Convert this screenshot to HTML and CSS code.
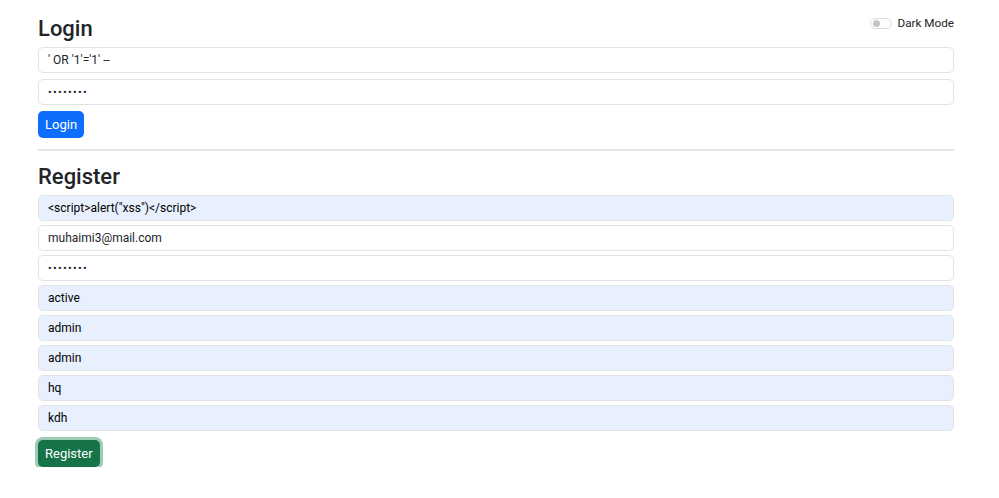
FILE: index.html
```html
<!DOCTYPE html>
<html lang="en">
<head>
<meta charset="utf-8">
<title>Login / Register</title>
<link rel="stylesheet" href="styles.css">
</head>
<body>
<div class="container">
  <div class="top-row">
    <h2 class="title">Login</h2>
    <label class="switch">
      <span class="switch-track"><span class="switch-knob"></span></span>
      <span class="switch-label">Dark Mode</span>
    </label>
  </div>
  <form class="form login-form">
    <input class="field" type="text" value="' OR '1'='1' --">
    <input class="field" type="password" value="password">
    <div><button type="button" class="btn btn-primary">Login</button></div>
  </form>
  <hr class="divider">
  <h2 class="title title-register">Register</h2>
  <form class="form register-form">
    <input class="field autofill" type="text" value="<script>alert(&quot;xss&quot;)</script>">
    <input class="field" type="text" value="muhaimi3@mail.com">
    <input class="field" type="password" value="password">
    <input class="field autofill" type="text" value="active">
    <input class="field autofill" type="text" value="admin">
    <input class="field autofill" type="text" value="admin">
    <input class="field autofill" type="text" value="hq">
    <input class="field autofill" type="text" value="kdh">
    <div class="register-actions"><button type="button" class="btn btn-success focused">Register</button></div>
  </form>
</div>
</body>
</html>
```
FILE: styles.css
```css
* { box-sizing: border-box; }
body {
  margin: 0;
  background: #fff;
  color: #212529;
  font-family: Roboto, "Liberation Sans", sans-serif;
}
.container {
  width: 916px;
  margin-left: 38px;
  padding-top: 16px;
}
.top-row {
  display: flex;
  justify-content: space-between;
  align-items: flex-start;
}
.title {
  margin: 0 0 5px;
  font-size: 22px;
  line-height: 26px;
  font-weight: 500;
}
.switch {
  display: flex;
  align-items: center;
  gap: 6px;
  margin-top: 0;
  font-size: 11.7px;
  line-height: 14px;
  color: #212529;
}
.switch-track {
  width: 22px;
  height: 11px;
  border: 1px solid #dcdcdc;
  border-radius: 6px;
  display: flex;
  align-items: center;
  padding-left: 2px;
}
.switch-knob {
  width: 7px;
  height: 7px;
  border-radius: 50%;
  background: #c4c4c4;
}
.form {
  display: flex;
  flex-direction: column;
  gap: 6px;
}
.register-form { gap: 4px; }
.field {
  height: 26px;
  border: 1px solid #e1e3e6;
  border-radius: 5px;
  padding: 0 9px;
  font-family: inherit;
  font-size: 12px;
  color: #212529;
  background: #fff;
  outline: none;
}
.field[type="password"] { font-size: 11px; letter-spacing: 1.3px; }
.field.autofill {
  background: #e8f0fe;
  color: #000;
}
.btn {
  border: none;
  border-radius: 5px;
  color: #fff;
  font-family: inherit;
  font-size: 13px;
  height: 27px;
  padding: 0 7px;
}
.btn-primary { background: #0d6efd; }
.btn-success { background: #157347; }
.btn.focused { box-shadow: 0 0 0 3px rgba(60, 153, 110, 0.5); }
.divider {
  border: none;
  border-top: 2px solid #e3e4e5;
  margin: 11px 0 13px;
}
.register-actions { margin-top: 5px; }
```
